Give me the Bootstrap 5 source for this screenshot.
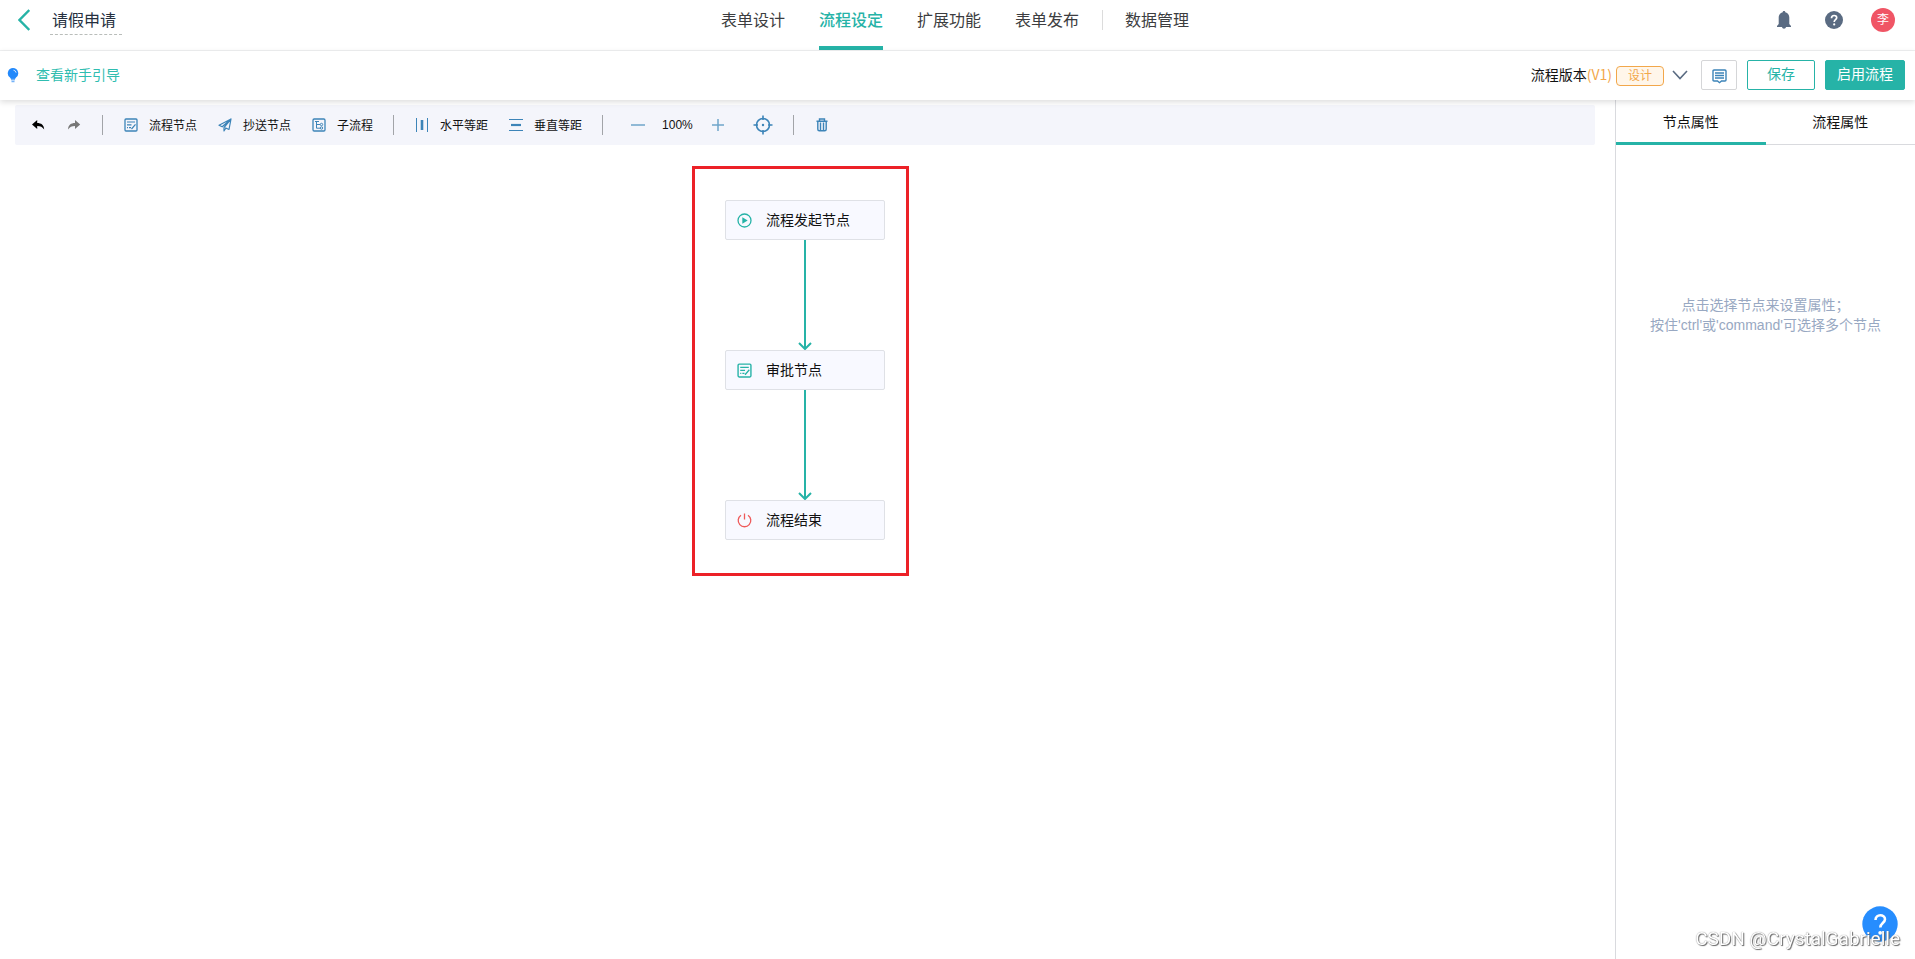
<!DOCTYPE html>
<html lang="zh-CN">
<head>
<meta charset="utf-8">
<meta name="viewport" content="width=device-width, initial-scale=1">
<title>请假申请 - 流程设定</title>
<link href="https://cdn.jsdelivr.net/npm/bootstrap@5.3.0/dist/css/bootstrap.min.css" rel="stylesheet">
<style>
:root{--teal:#26b3a7;--blue:#3c84b8;--slate:#5a6b82;--edge:#d9dade}
body{font-family:"Liberation Sans","Noto Sans CJK SC",sans-serif;font-size:14px;line-height:20px;color:#111;background:#fff}
svg{display:block;flex:none}
button{color:inherit}
.bare{border:0;background:none;padding:0}
.topbar{height:51px;border-bottom:1px solid #f0f1f2}
.side{flex:1 1 0}
.back{margin:9px 20px 0 18px}
.form-title{width:72px;height:29px;margin-top:6px;border:0;border-bottom:1px dashed #b9bdba;padding:0 2px 2px;font-size:16px;line-height:26px;color:#26303f;background:none;outline:0}
.main-nav{gap:34px;font-size:16px}
.main-nav a{height:50px;line-height:42px;color:#3c3d40;text-decoration:none}
.main-nav a.active{color:var(--teal);border-bottom:4px solid var(--teal);font-weight:500}
.nav-rule{width:1px;height:20px;margin:10px -12px 0 -11px;background:#dcdcdc}
.tools{height:40px;padding-right:5px;color:var(--slate)}
.help-btn{margin:0 28px 0 34px}
.avatar{width:24px;height:24px;margin-right:15px;border-radius:50%;background:#f05565;color:#fff;font-size:12px;line-height:24px;text-align:center}
.subbar{height:49px;box-shadow:0 2px 6px rgba(0,0,0,.14);position:relative;z-index:2;background:#fff;padding:0 10px 1px 7px}
.guide{color:#2fbdb0;text-decoration:none;margin-left:17px}
.orange{color:#f2a74b}
.version{font-family:"Noto Sans CJK SC",sans-serif;padding-bottom:2px}
.state{width:48px;height:20px;border:1px solid #f2a74b;border-radius:4px;background:#fff6ea;font-size:12px;line-height:18px;text-align:center;margin:2px 8px 0 4px}
.acts{gap:10px;margin-left:13px}
.act{height:30px;border:1px solid var(--teal);border-radius:2px;background:#fff;color:var(--teal);font-size:14px;line-height:26px;padding:0 0 2px}
.act-save{width:68px}
.act-note{width:36px;border-color:#d5d6d8;padding:2px 0 0}
.act-go{width:80px;background:var(--teal);color:#fff}
.toolbar{height:40px;margin:5px 20px 0 15px;padding-left:16px;gap:21px;background:#f4f5fb;border-radius:2px;font-size:12px}
.toolbar button{display:flex;align-items:center;gap:11px;line-height:20px}
.toolbar button span{padding-top:2px}
.toolbar svg{color:var(--blue)}
.rule{width:1px;height:20px;margin-left:-1px;background:#a2a4a8}
.zoomer{gap:17px;margin:0 7px}
.zoomer output{width:32px}
.flow-area{padding:0 20px 0 15px}
.flow{width:160px;margin:55px auto 0;position:relative}
.flow-frame{position:absolute;inset:-34px -24px -36px -33px;border:3px solid #ec2127;pointer-events:none}
.flow-node{width:160px;height:40px;border:1px solid #dfe1e6;border-radius:2px;background:#f8f9ff;padding:0 11px;gap:14px}
.prop-panel{width:300px;flex:none;border-left:1px solid var(--edge)}
.prop-tabs{height:45px}
.prop-tabs button{line-height:44px;border-bottom:1px solid var(--edge)}
.prop-tabs button.active{padding-top:2px;line-height:40px;border-bottom:3px solid var(--teal)}
.hint{margin-top:150px;color:#98a8c2}
.help-fab{position:fixed;right:17px;bottom:17px;width:36px;height:36px}
.stamp{position:fixed;right:15px;bottom:8px;font-family:Roboto,"Liberation Sans",sans-serif;font-weight:400;font-size:19px;line-height:24px;color:#fff;text-shadow:1px 1px 1px #666,0 0 1px #777}
</style>
<script src="https://cdn.jsdelivr.net/npm/bootstrap@5.3.0/dist/js/bootstrap.bundle.min.js"></script>
</head>
<body class="d-flex flex-column min-vh-100">
<svg width="0" height="0" class="position-absolute" aria-hidden="true">
  <symbol id="i-form" viewBox="0 0 14 14"><rect x="1" y="1" width="12" height="12" rx="1" fill="none" stroke="currentColor" stroke-width="1.3"/><path d="M3 4h8M3 6.8h4.5M3 9.7h1M5 9.7h2M7.5 11l4-4.7" fill="none" stroke="currentColor" stroke-width="1.2"/></symbol>
</svg>
<header class="topbar d-flex align-items-start">
  <div class="side d-flex align-items-start">
    <button class="bare back" aria-label="返回"><svg width="12" height="22" viewBox="0 0 12 22" fill="none" stroke="#26b3a7" stroke-width="2.4"><path d="M11.3 1 1.500 11l9.800 10"/></svg></button>
    <input class="form-title" aria-label="表单名称" value="请假申请">
  </div>
  <nav class="main-nav d-flex">
    <a href="#">表单设计</a><a href="#" class="active">流程设定</a><a href="#">扩展功能</a><a href="#">表单发布</a>
    <span class="nav-rule"></span><a href="#">数据管理</a>
  </nav>
  <div class="side tools d-flex align-items-center justify-content-end">
    <button class="bare" aria-label="通知"><svg width="14" height="18" viewBox="0 0 14 18" fill="currentColor"><path d="M7 0c.8 0 1.300.5 1.300 1.200C11 1.900 12.300 4 12.300 6.500V13l1.700 2v1H9c-.2 1-1 1.700-2 1.700S5.200 17 5 16H0v-1l1.700-2V6.500C1.700 4 3 1.900 5.700 1.200 5.700.5 6.200 0 7 0z"/></svg></button>
    <button class="bare help-btn" aria-label="帮助"><svg width="18" height="18" viewBox="0 0 18 18"><circle cx="9" cy="9" r="9" fill="currentColor"/><path d="M6.500 7.200c0-3.600 5.200-3.400 5.200-.5 0 2-2.500 2-2.500 4.200" fill="none" stroke="#fff" stroke-width="1.700"/><circle cx="9.200" cy="13.400" r="1.100" fill="#fff"/></svg></button>
    <div class="avatar">李</div>
  </div>
</header>
<section class="subbar d-flex align-items-center justify-content-between">
  <div class="d-flex align-items-center">
    <svg width="12" height="15" viewBox="0 0 12 15"><path d="M6 0a5.300 5.300 0 0 1 3 9.600L8 11H4L3 9.600A5.300 5.300 0 0 1 6 0z" fill="#2389fb"/><path d="M6.500 2.200a3 3 0 0 1 2.600 2.500" fill="none" stroke="#cfe5ff"/><path d="M4 11.500h4M4.500 13.500h3" stroke="#74b2f8" stroke-width="1.300"/></svg>
    <a class="guide" href="#">查看新手引导</a>
  </div>
  <div class="d-flex align-items-center">
    <span class="version">流程版本<span class="orange">(V1)</span></span>
    <span class="state orange">设计</span>
    <button class="bare" aria-label="切换版本"><svg width="16" height="10" viewBox="0 0 16 10" fill="none" stroke="#5a6b82" stroke-width="1.600"><path d="m1 1 7 7.500L15 1"/></svg></button>
    <div class="acts d-flex">
      <button class="act act-note d-flex align-items-center justify-content-center" aria-label="备注"><svg width="15" height="15" viewBox="0 0 15 15" fill="none" stroke="#3c84b8" stroke-width="1.400"><path d="M2 1h11q1 0 1 1v9q0 1-1 1H9.500l-2 1.700-2-1.700H2q-1 0-1-1V2q0-1 1-1zM3 4h9M3 6.500h9M3 9h9"/></svg></button>
      <button class="act act-save">保存</button>
      <button class="act act-go">启用流程</button>
    </div>
  </div>
</section>
<main class="d-flex flex-grow-1">
  <section class="flex-grow-1">
    <div class="toolbar d-flex align-items-center">
      <button class="bare" aria-label="撤销"><svg width="15" height="14" viewBox="0 0 15 14"><path d="M1 6.500 6.200 2v3c4 0 6.800 2 7 6.500C11.500 9 9.500 8 6.200 8v3z" fill="#000"/></svg></button>
      <button class="bare" aria-label="重做"><svg width="15" height="14" viewBox="0 0 15 14"><path d="M13.200 6.500 8 2v3c-4 0-6.800 2-7 6.500C2.700 9 4.700 8 8 8v3z" fill="#777"/></svg></button>
      <span class="rule"></span>
      <button class="bare"><svg width="14" height="14"><use href="#i-form"/></svg><span>流程节点</span></button>
      <button class="bare"><svg width="14" height="14" viewBox="0 0 14 14" fill="none" stroke="currentColor" stroke-width="1.200" stroke-linejoin="round"><path d="M13 1 1 7.200l3.200 1.600L13 1l-2 10.500-3.800-1.700M13 1 6 9.500V13l1.800-2.800"/></svg><span>抄送节点</span></button>
      <button class="bare"><svg width="14" height="14" viewBox="0 0 14 14" fill="none" stroke="currentColor"><rect x="1" y="1" width="12" height="12" rx="1.200" stroke-width="1.300"/><path d="M3 3.500h4M4.500 3.500v6.700H8M4.500 6.500H8"/><circle cx="9.500" cy="6.500" r="1.200"/><circle cx="9.500" cy="10" r="1.200"/></svg><span>子流程</span></button>
      <span class="rule"></span>
      <button class="bare"><svg width="14" height="14" viewBox="0 0 14 14" stroke="currentColor"><path d="M1.500 0v14M12.500 0v14"/><path d="M7 2v10" stroke-width="2.600"/></svg><span>水平等距</span></button>
      <button class="bare"><svg width="14" height="14" viewBox="0 0 14 14" stroke="currentColor"><path d="M0 1.500h14M0 12.500h14"/><path d="M2 7h10" stroke-width="2.200"/></svg><span>垂直等距</span></button>
      <span class="rule"></span>
      <div class="zoomer d-flex align-items-center">
        <button class="bare" aria-label="缩小"><svg width="14" height="14" stroke="#6fa5ca" stroke-width="1.500"><path d="M0 7h14"/></svg></button>
        <output>100%</output>
        <button class="bare" aria-label="放大"><svg width="14" height="14" stroke="#6fa5ca" stroke-width="1.500"><path d="M1 7h12M7 1v12"/></svg></button>
      </div>
      <button class="bare" aria-label="定位"><svg width="20" height="20" viewBox="0 0 20 20" fill="none" stroke="currentColor" stroke-width="1.600"><circle cx="10" cy="10" r="6.500"/><path d="M10 .5V5M10 15v4.500M.5 10H5M15 10h4.500"/><circle cx="10" cy="10" r="1.200" fill="currentColor" stroke="none"/></svg></button>
      <span class="rule"></span>
      <button class="bare" aria-label="删除"><svg width="14" height="14" viewBox="0 0 14 14" fill="none" stroke="currentColor" stroke-width="1.400"><path d="M1.500 3.200h11M4.500 3V1h5v2M2.800 3.500v7.700q0 1.500 1.500 1.500h5.400q1.500 0 1.500-1.500V3.500M5.500 4.500v7.500M8.500 4.500v7.500"/></svg></button>
    </div>
    <div class="flow-area">
      <div class="flow">
        <div class="flow-frame"></div>
        <div class="flow-node d-flex align-items-center"><svg width="15" height="15" viewBox="0 0 15 15"><circle cx="7.500" cy="7.500" r="6.500" fill="none" stroke="#26b3a7" stroke-width="1.300"/><path d="m5.300 4.200 5.400 3.300-5.400 3.300z" fill="#26b3a7"/></svg>流程发起节点</div>
        <svg class="mx-auto" width="14" height="110" viewBox="0 0 14 110" fill="none" stroke="#26b3a7" stroke-width="2"><path d="M7 0v109M1 103l6 6 6-6"/></svg>
        <div class="flow-node d-flex align-items-center"><svg width="15" height="15" color="#26b3a7"><use href="#i-form"/></svg>审批节点</div>
        <svg class="mx-auto" width="14" height="110" viewBox="0 0 14 110" fill="none" stroke="#26b3a7" stroke-width="2"><path d="M7 0v109M1 103l6 6 6-6"/></svg>
        <div class="flow-node d-flex align-items-center"><svg width="15" height="15" viewBox="0 0 15 15" fill="none" stroke="#ee5a5a" stroke-width="1.300"><path d="M4 2.200a6.300 6.300 0 1 0 7 0M7.500.5v6"/></svg>流程结束</div>
      </div>
    </div>
  </section>
  <aside class="prop-panel">
    <div class="prop-tabs d-flex">
      <button class="bare flex-fill w-50 active">节点属性</button>
      <button class="bare flex-fill w-50">流程属性</button>
    </div>
    <p class="hint text-center mb-0">点击选择节点来设置属性；<br>按住'ctrl'或'command'可选择多个节点</p>
  </aside>
</main>
<button class="bare help-fab" aria-label="在线帮助"><svg width="36" height="36" viewBox="0 0 36 36"><circle cx="18" cy="18" r="17.700" fill="#268dfe"/><path d="M13.500 14c0-6.500 9.500-6 9.500-.8 0 3.800-4.700 3.800-4.700 8.300" fill="none" stroke="#fff" stroke-width="2.600"/><circle cx="18.200" cy="26.800" r="1.900" fill="#fff"/></svg></button>
<div class="stamp">CSDN @CrystalGabrielle</div>
</body>
</html>
